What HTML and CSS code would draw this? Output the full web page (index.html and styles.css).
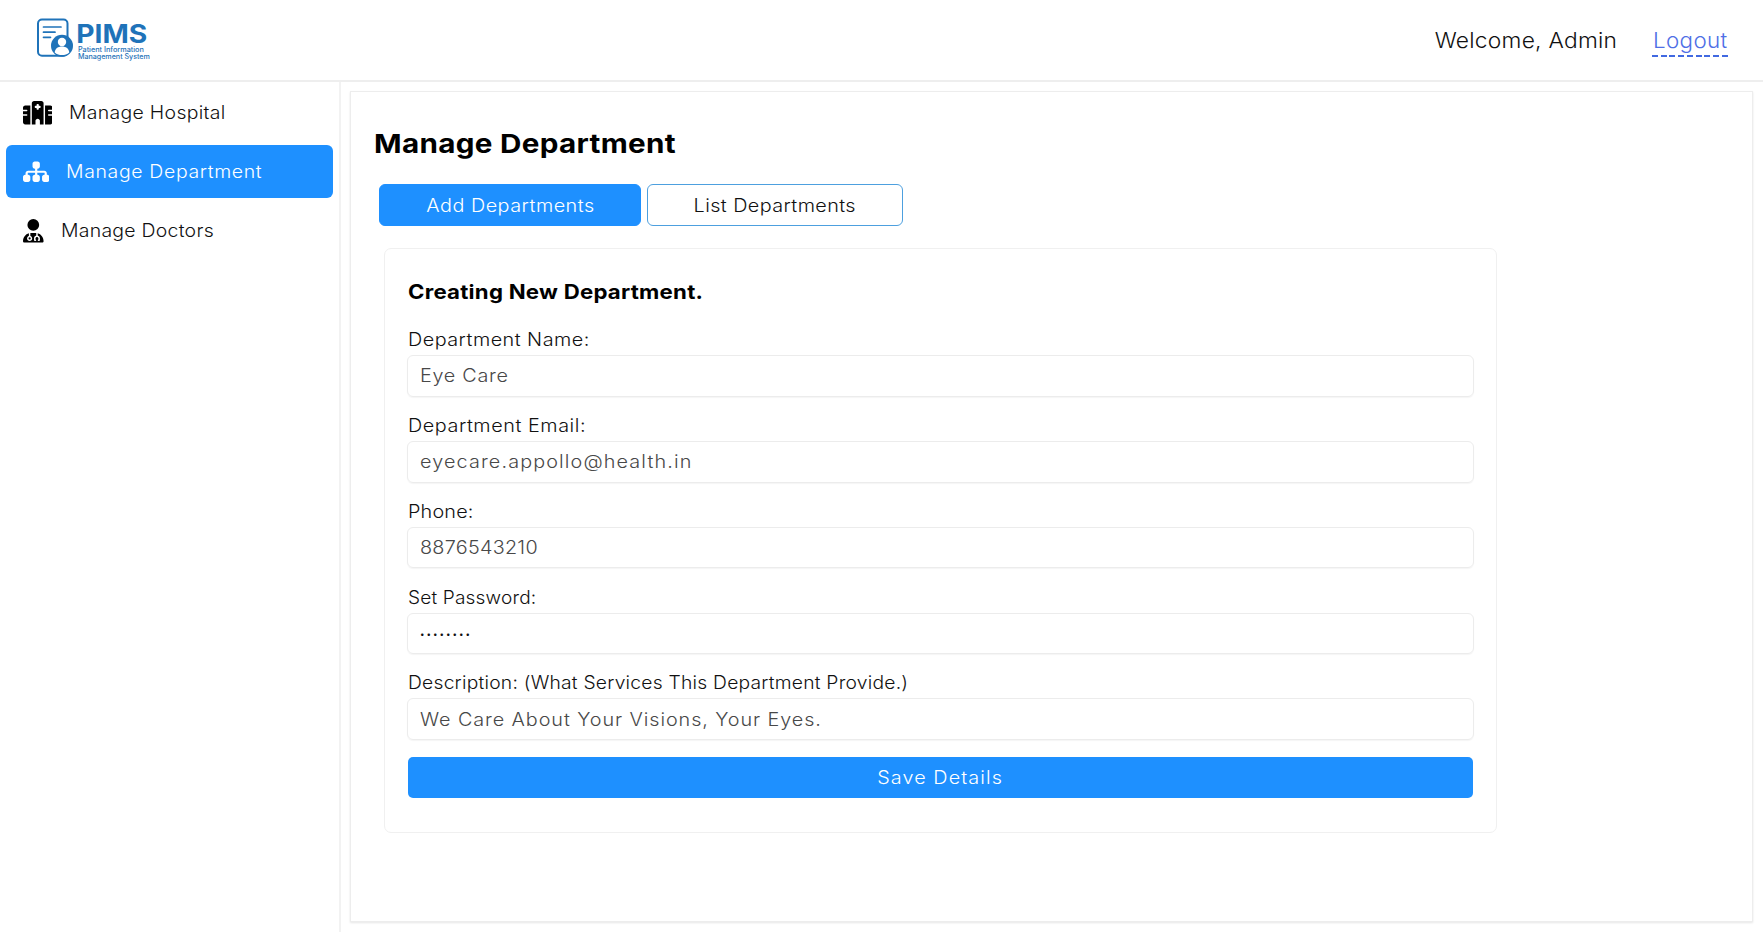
FILE: index.html
```html
<!DOCTYPE html>
<html lang="en">
<head>
<meta charset="utf-8">
<title>PIMS - Manage Department</title>
<link rel="stylesheet" href="styles.css">
</head>
<body>
<header class="topbar">
  <svg class="logo" width="120" height="48" viewBox="0 0 120 48" role="img" aria-label="PIMS">
    <rect x="3" y="4.500" width="29.500" height="36.200" rx="4" class="line"/>
    <path d="M8.500 12h17.500M8.500 17.200h11.500M8.500 22.300h7" class="line text-line"/>
    <circle cx="27" cy="30.800" r="11" class="solid"/>
    <circle cx="27" cy="27" r="4.200" class="light"/>
    <path d="M19.700 37.400c.4-4 3.300-6 7.300-6s6.900 2 7.300 6c-4 3.500-10.600 3.500-14.600 0z" class="light"/>
    <text x="41.300" y="28" class="logo-name" textLength="71" lengthAdjust="spacingAndGlyphs">PIMS</text>
    <text x="42.900" y="37" class="logo-tag" textLength="66" lengthAdjust="spacingAndGlyphs">Patient Information</text>
    <text x="42.900" y="44.300" class="logo-tag" textLength="72" lengthAdjust="spacingAndGlyphs">Management System</text>
  </svg>
  <div class="account">
    <span class="welcome">Welcome, Admin</span>
    <a class="logout" href="#"><span class="t">Logout</span></a>
  </div>
</header>
<div class="layout">
  <nav class="sidebar">
    <a class="nav-item hospital" href="#">
      <svg width="29.400" height="23.500" viewBox="0 0 640 512"><path d="M192 48c0-26.500 21.500-48 48-48H400c26.500 0 48 21.500 48 48V512H368V432c0-26.500-21.500-48-48-48s-48 21.500-48 48v80H192V48zM48 96H160V512H48c-26.500 0-48-21.500-48-48V320H80c8.800 0 16-7.200 16-16s-7.200-16-16-16H0V224H80c8.800 0 16-7.200 16-16s-7.200-16-16-16H0V144c0-26.500 21.500-48 48-48zm544 0c26.500 0 48 21.500 48 48v48H560c-8.800 0-16 7.200-16 16s7.200 16 16 16h80v64H560c-8.800 0-16 7.200-16 16s7.200 16 16 16h80V464c0 26.500-21.500 48-48 48H480V96H592zM312 64c-8.800 0-16 7.200-16 16v24H272c-8.800 0-16 7.200-16 16v16c0 8.800 7.200 16 16 16h24v24c0 8.800 7.200 16 16 16h16c8.800 0 16-7.200 16-16V152h24c8.800 0 16-7.200 16-16V120c0-8.800-7.200-16-16-16H344V80c0-8.800-7.200-16-16-16H312z"/></svg>
      <span class="t">Manage Hospital</span>
    </a>
    <a class="nav-item department active" href="#">
      <svg width="26.400" height="23.500" viewBox="0 0 576 512"><path d="M208 80c0-26.500 21.500-48 48-48h64c26.500 0 48 21.500 48 48v64c0 26.500-21.500 48-48 48h-8v40H464c30.900 0 56 25.100 56 56v32h8c26.500 0 48 21.500 48 48v64c0 26.500-21.500 48-48 48H464c-26.500 0-48-21.500-48-48V368c0-26.500 21.500-48 48-48h8V288c0-4.400-3.600-8-8-8H312v40h8c26.500 0 48 21.500 48 48v64c0 26.500-21.500 48-48 48H256c-26.500 0-48-21.500-48-48V368c0-26.500 21.500-48 48-48h8V280H112c-4.400 0-8 3.600-8 8v32h8c26.500 0 48 21.500 48 48v64c0 26.500-21.500 48-48 48H48c-26.500 0-48-21.500-48-48V368c0-26.500 21.500-48 48-48h8V288c0-30.900 25.100-56 56-56H264V192h-8c-26.500 0-48-21.500-48-48V80z"/></svg>
      <span class="t">Manage Department</span>
    </a>
    <a class="nav-item doctors" href="#">
      <svg width="20.600" height="23.500" viewBox="0 0 448 512"><path d="M224 256a128 128 0 1 0 0-256 128 128 0 1 0 0 256zm-96 55.200C54 332.900 0 401.300 0 482.300C0 498.700 13.300 512 29.700 512H418.300c16.400 0 29.700-13.300 29.700-29.700c0-81-54-149.400-128-171.100V362c27.600 7.100 48 32.200 48 62v40c0 8.800-7.200 16-16 16H336c-8.800 0-16-7.200-16-16s7.200-16 16-16V424c0-17.700-14.300-32-32-32s-32 14.300-32 32v24c8.800 0 16 7.200 16 16s-7.200 16-16 16H256c-8.800 0-16-7.200-16-16V424c0-29.800 20.400-54.900 48-62V304.900c-6-.6-12.100-.9-18.300-.9H178.300c-6.200 0-12.300 .3-18.300 .9v65.400c23.100 6.900 40 28.300 40 53.700c0 30.900-25.100 56-56 56s-56-25.100-56-56c0-25.400 16.900-46.800 40-53.700V311.200zM144 448a24 24 0 1 0 0-48 24 24 0 1 0 0 48z"/></svg>
      <span class="t">Manage Doctors</span>
    </a>
  </nav>
  <main class="panel">
    <h1>Manage Department</h1>
    <div class="tabs">
      <button class="tab add"><span class="t">Add Departments</span></button>
      <button class="tab list"><span class="t">List Departments</span></button>
    </div>
    <form class="card">
      <h2>Creating New Department.</h2>
      <div class="field name"><label>Department Name:</label><div class="input"><span class="t">Eye Care</span></div></div>
      <div class="field email"><label>Department Email:</label><div class="input"><span class="t">eyecare.appollo@health.in</span></div></div>
      <div class="field phone"><label>Phone:</label><div class="input"><span class="t">8876543210</span></div></div>
      <div class="field password"><label>Set Password:</label><div class="input">••••••••</div></div>
      <div class="field about"><label>Description: (What Services This Department Provide.)</label><div class="input"><span class="t">We Care About Your Visions, Your Eyes.</span></div></div>
      <button class="save" type="button"><span class="t">Save Details</span></button>
    </form>
  </main>
</div>
</body>
</html>
```
FILE: styles.css
```css
* { box-sizing: border-box; }
body {
  margin: 0;
  height: 932px;
  display: flex;
  flex-direction: column;
  overflow: hidden;
  background: #fff;
  color: #111;
  font-family: Inter, "Open Sans", sans-serif;
  font-size: 18px;
  font-weight: 350;
}
a { color: inherit; text-decoration: none; }
button { font: inherit; margin: 0; padding: 0; }

/* Wide letterforms */
.t { display: inline-block; transform: scaleX(1.1); transform-origin: left center; }
button .t { transform-origin: center; }

.topbar {
  height: 82px;
  flex: none;
  display: flex;
  justify-content: space-between;
  align-items: center;
  padding: 0 35px 0 35px;
  border-bottom: 2px solid #eee;
}
.logo { margin-top: -3px; }
.logo .line { fill: none; stroke: #1f73b9; stroke-width: 2; }
.logo .text-line { stroke-linecap: round; stroke-width: 1.700; }
.logo .solid { fill: #1f73b9; }
.logo .light { fill: #fff; }
.logo text { fill: #1f73b9; }
.logo-name { font-size: 25.500px; font-weight: 700; }
.logo-tag { font-size: 6.900px; font-weight: 500; }

.account { display: flex; align-items: center; gap: 34.500px; font-size: 21.500px; }
.welcome { letter-spacing: .23px; transform: scaleX(1.06); transform-origin: right center; }
.logout {
  color: #4f6fe6;
  letter-spacing: .33px;
  padding-left: 1px;
  line-height: 27px;
  margin-top: 3px;
  width: 76px;
  height: 30px;
  background: repeating-linear-gradient(90deg, #4169e1 0 6px, transparent 6px 8.750px) left bottom / 100% 2px no-repeat;
}
.logout .t { transform: scaleX(1.04); }

.layout { flex: 1; display: flex; min-height: 0; }
.sidebar {
  width: 341px;
  flex: none;
  display: flex;
  flex-direction: column;
  gap: 5.700px;
  padding: 4.200px 6.500px 0 5.500px;
  border-right: 2px solid #f2f2f2;
}
.nav-item {
  height: 53.300px;
  display: flex;
  align-items: center;
  gap: 17px;
  padding-left: 17.500px;
  border-radius: 6px;
  white-space: nowrap;
}
.nav-item .t { transform: scaleX(1.08); }
.nav-item svg { fill: #000; }
.active { background: #1e90ff; color: #fff; }
.active svg { fill: #fff; }
.hospital { letter-spacing: .28px; }
.department { letter-spacing: .61px; }
.doctors { letter-spacing: .24px; }

.panel {
  width: 1403px;
  height: 831px;
  margin: 9px 0 0 9px;
  padding: 36px 22.500px 0;
  border: 1px solid #ededed;
  box-shadow: 0 1px 2px #e6e6e6;
}
h1 {
  margin: 0 0 24px;
  font-size: 26px;
  line-height: 32px;
  font-weight: 700;
  letter-spacing: .27px;
  color: #000;
  width: max-content;
  transform: scaleX(1.14);
  transform-origin: left center;
}
.tabs { display: flex; gap: 6px; margin-left: 5.500px; }
.tab { height: 42px; border-radius: 6px; border: 1px solid #4da0df; }
.add { width: 262px; background: #1e90ff; border-color: #1e90ff; color: #fff; letter-spacing: .44px; }
.list { width: 256px; background: #fff; color: #111; letter-spacing: .37px; }
.card {
  width: 1113px;
  height: 585px;
  margin: 22px 0 0 10.500px;
  padding: 29.500px 22px 0;
  border: 1px solid #f0f0f0;
  border-radius: 7px;
}
h2 {
  margin: 0 0 23.500px 1px;
  font-size: 20.200px;
  line-height: 26px;
  font-weight: 700;
  letter-spacing: .22px;
  color: #000;
  width: max-content;
  transform: scaleX(1.1);
  transform-origin: left center;
}
.field { height: 85.850px; }
.field label {
  display: block;
  width: max-content;
  line-height: 23px;
  margin: 0 0 4px .5px;
  transform: scaleX(1.1);
  transform-origin: left center;
}
.input {
  width: 1067px;
  height: 41.800px;
  display: flex;
  align-items: center;
  padding-left: 12px;
  color: #484848;
  border: 1px solid #ececec;
  border-radius: 6px;
  box-shadow: 0 1px 1px #f5f5f5;
}
.name label { letter-spacing: .43px; }
.name .input { letter-spacing: .64px; }
.email label { letter-spacing: .5px; }
.email .input { letter-spacing: 1.020px; }
.phone label { letter-spacing: .15px; }
.phone .input { letter-spacing: .24px; }
.password label { letter-spacing: .15px; transform: scaleX(1.06); }
.password .input { font-size: 8px; font-weight: 400; letter-spacing: 2px; color: #111; padding-top: 2px; }
.about label { letter-spacing: .21px; transform: scaleX(1.07); }
.about .input { letter-spacing: .83px; }
.save {
  display: block;
  width: 1065.500px;
  height: 41px;
  margin-left: .5px;
  border: 0;
  border-radius: 5px;
  background: #1e90ff;
  color: #fff;
  letter-spacing: .97px;
}
```
